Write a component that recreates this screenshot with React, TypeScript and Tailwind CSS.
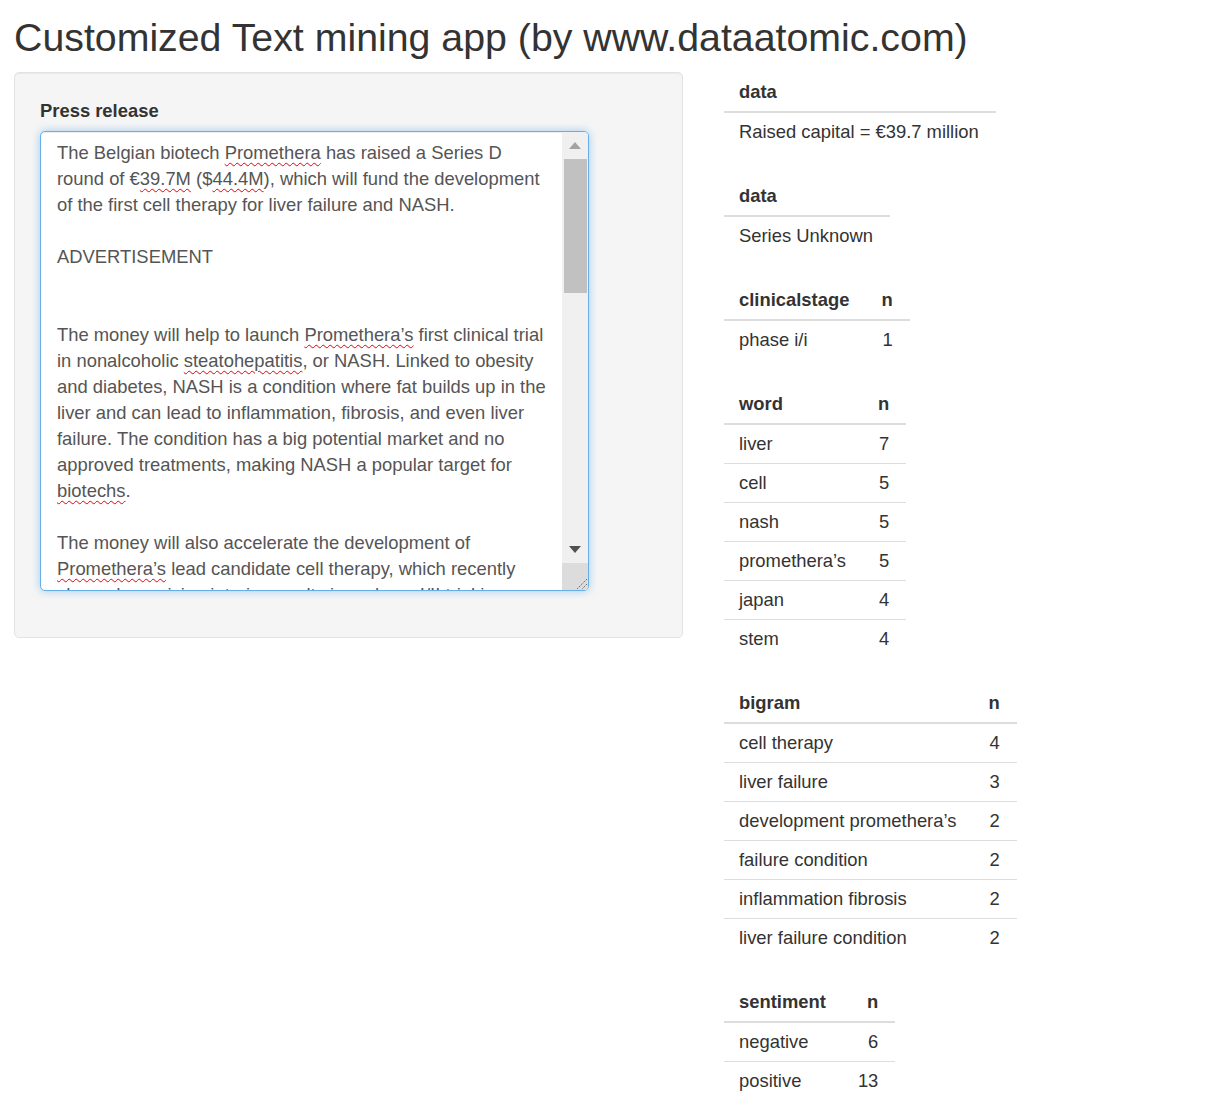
type Seg = string | { w: string };

const lines: Seg[][] = [
  ["The Belgian biotech ", { w: "Promethera" }, " has raised a Series D"],
  ["round of €", { w: "39.7M" }, " ($", { w: "44.4M" }, "), which will fund the development"],
  ["of the first cell therapy for liver failure and NASH."],
  [],
  ["ADVERTISEMENT"],
  [],
  [],
  ["The money will help to launch ", { w: "Promethera’s" }, " first clinical trial"],
  ["in nonalcoholic ", { w: "steatohepatitis" }, ", or NASH. Linked to obesity"],
  ["and diabetes, NASH is a condition where fat builds up in the"],
  ["liver and can lead to inflammation, fibrosis, and even liver"],
  ["failure. The condition has a big potential market and no"],
  ["approved treatments, making NASH a popular target for"],
  [{ w: "biotechs" }, "."],
  [],
  ["The money will also accelerate the development of"],
  [{ w: "Promethera’s" }, " lead candidate cell therapy, which recently"],
  ["showed promising interim results in a phase I/II trial in"],
];

const tables: { cols: string[]; rows: string[][] }[] = [
  { cols: ["data"], rows: [["Raised capital = €39.7 million"]] },
  { cols: ["data"], rows: [["Series Unknown"]] },
  { cols: ["clinicalstage", "n"], rows: [["phase i/i", "1"]] },
  {
    cols: ["word", "n"],
    rows: [
      ["liver", "7"],
      ["cell", "5"],
      ["nash", "5"],
      ["promethera’s", "5"],
      ["japan", "4"],
      ["stem", "4"],
    ],
  },
  {
    cols: ["bigram", "n"],
    rows: [
      ["cell therapy", "4"],
      ["liver failure", "3"],
      ["development promethera’s", "2"],
      ["failure condition", "2"],
      ["inflammation fibrosis", "2"],
      ["liver failure condition", "2"],
    ],
  },
  {
    cols: ["sentiment", "n"],
    rows: [
      ["negative", "6"],
      ["positive", "13"],
    ],
  },
];

const ResultTable = ({ cols, rows }: { cols: string[]; rows: string[][] }) => {
  return (
    <table className="mb-[26px] text-[18.4px] leading-[26px]">
      <thead>
        <tr>
          {cols.map((c, i) => (
            <th
              key={c}
              className={
                i === 0
                  ? "border-b-2 border-[#ddd] py-[6px] pl-[15px] pr-[17px] text-left font-bold"
                  : "border-b-2 border-[#ddd] py-[6px] pl-[15px] pr-[17px] text-right font-bold"
              }
            >
              {c}
            </th>
          ))}
        </tr>
      </thead>
      <tbody>
        {rows.map((r, ri) => (
          <tr key={ri}>
            {r.map((v, ci) => (
              <td
                key={ci}
                className={
                  (ri > 0 ? "border-t border-[#ddd] " : "") +
                  (ci === 0
                    ? "py-[6px] pl-[15px] pr-[17px] text-left whitespace-nowrap"
                    : "py-[6px] pl-[15px] pr-[17px] text-right")
                }
              >
                {v}
              </td>
            ))}
          </tr>
        ))}
      </tbody>
    </table>
  );
};

const FakeScrollbar = () => (
  <div className="flex w-[26px] shrink-0 flex-col bg-[#f0f0f0]">
    <div className="flex h-[27px] items-center justify-center">
      <svg width="12" height="7" viewBox="0 0 12 7">
        <path d="M0 7 L6 0 L12 7 Z" fill="#a3a3a3" />
      </svg>
    </div>
    <div className="ml-[2px] mr-[1px] h-[134px] bg-[#c1c1c1]" />
    <div className="flex-1" />
    <div className="flex h-[27px] items-center justify-center">
      <svg width="12" height="7" viewBox="0 0 12 7">
        <path d="M0 0 L6 7 L12 0 Z" fill="#505050" />
      </svg>
    </div>
    <div className="relative h-[27px] bg-[#dcdcdc]">
      <svg className="absolute bottom-0 right-0" width="14" height="14" viewBox="0 0 14 14">
        <path d="M13 3 L3 13 M13 8 L8 13" stroke="#6b6b6b" strokeWidth="1" strokeDasharray="1.5 1" />
      </svg>
    </div>
  </div>
);

export default function App() {
  return (
    <div className="min-h-screen bg-white font-['Liberation_Sans',Arial,sans-serif] text-[#333]">
      <h2 className="mb-[13px] pl-[14px] pt-[16px] text-[39.3px] leading-[43px] font-normal">
        Customized Text mining app (by www.dataatomic.com)
      </h2>
      <div className="flex items-start gap-[41px] pl-[14px]">
        <div className="w-[669px] shrink-0 rounded-[5px] border border-[#e3e3e3] bg-[#f5f5f5] px-[25px] pb-[26px] pt-[25px] shadow-[inset_0_1px_1px_rgba(0,0,0,0.05)]">
          <div className="mb-[7px] text-[18.4px] font-bold leading-[26px]">Press release</div>
          <div className="mb-[20px] flex h-[460px] w-[549px] overflow-hidden rounded-[5px] border border-[#66afe9] bg-white shadow-[inset_0_1px_1px_rgba(0,0,0,0.075),0_0_8px_rgba(102,175,233,0.6)]">
            <div className="flex-1 overflow-hidden pl-[16px] pt-[8px] text-[18.4px] leading-[26px] text-[#555]">
              {lines.map((segs, i) => (
                <div key={i} className="h-[26px] whitespace-pre">
                  {segs.map((s, j) =>
                    typeof s === "string" ? (
                      <span key={j}>{s}</span>
                    ) : (
                      <span
                        key={j}
                        className="underline decoration-red-600 decoration-wavy decoration-1 underline-offset-[3px]"
                      >
                        {s.w}
                      </span>
                    )
                  )}
                </div>
              ))}
            </div>
            <FakeScrollbar />
          </div>
        </div>
        <div className="flex flex-col items-start pt-[1px]">
          {tables.map((t, i) => (
            <ResultTable key={i} cols={t.cols} rows={t.rows} />
          ))}
        </div>
      </div>
    </div>
  );
}
